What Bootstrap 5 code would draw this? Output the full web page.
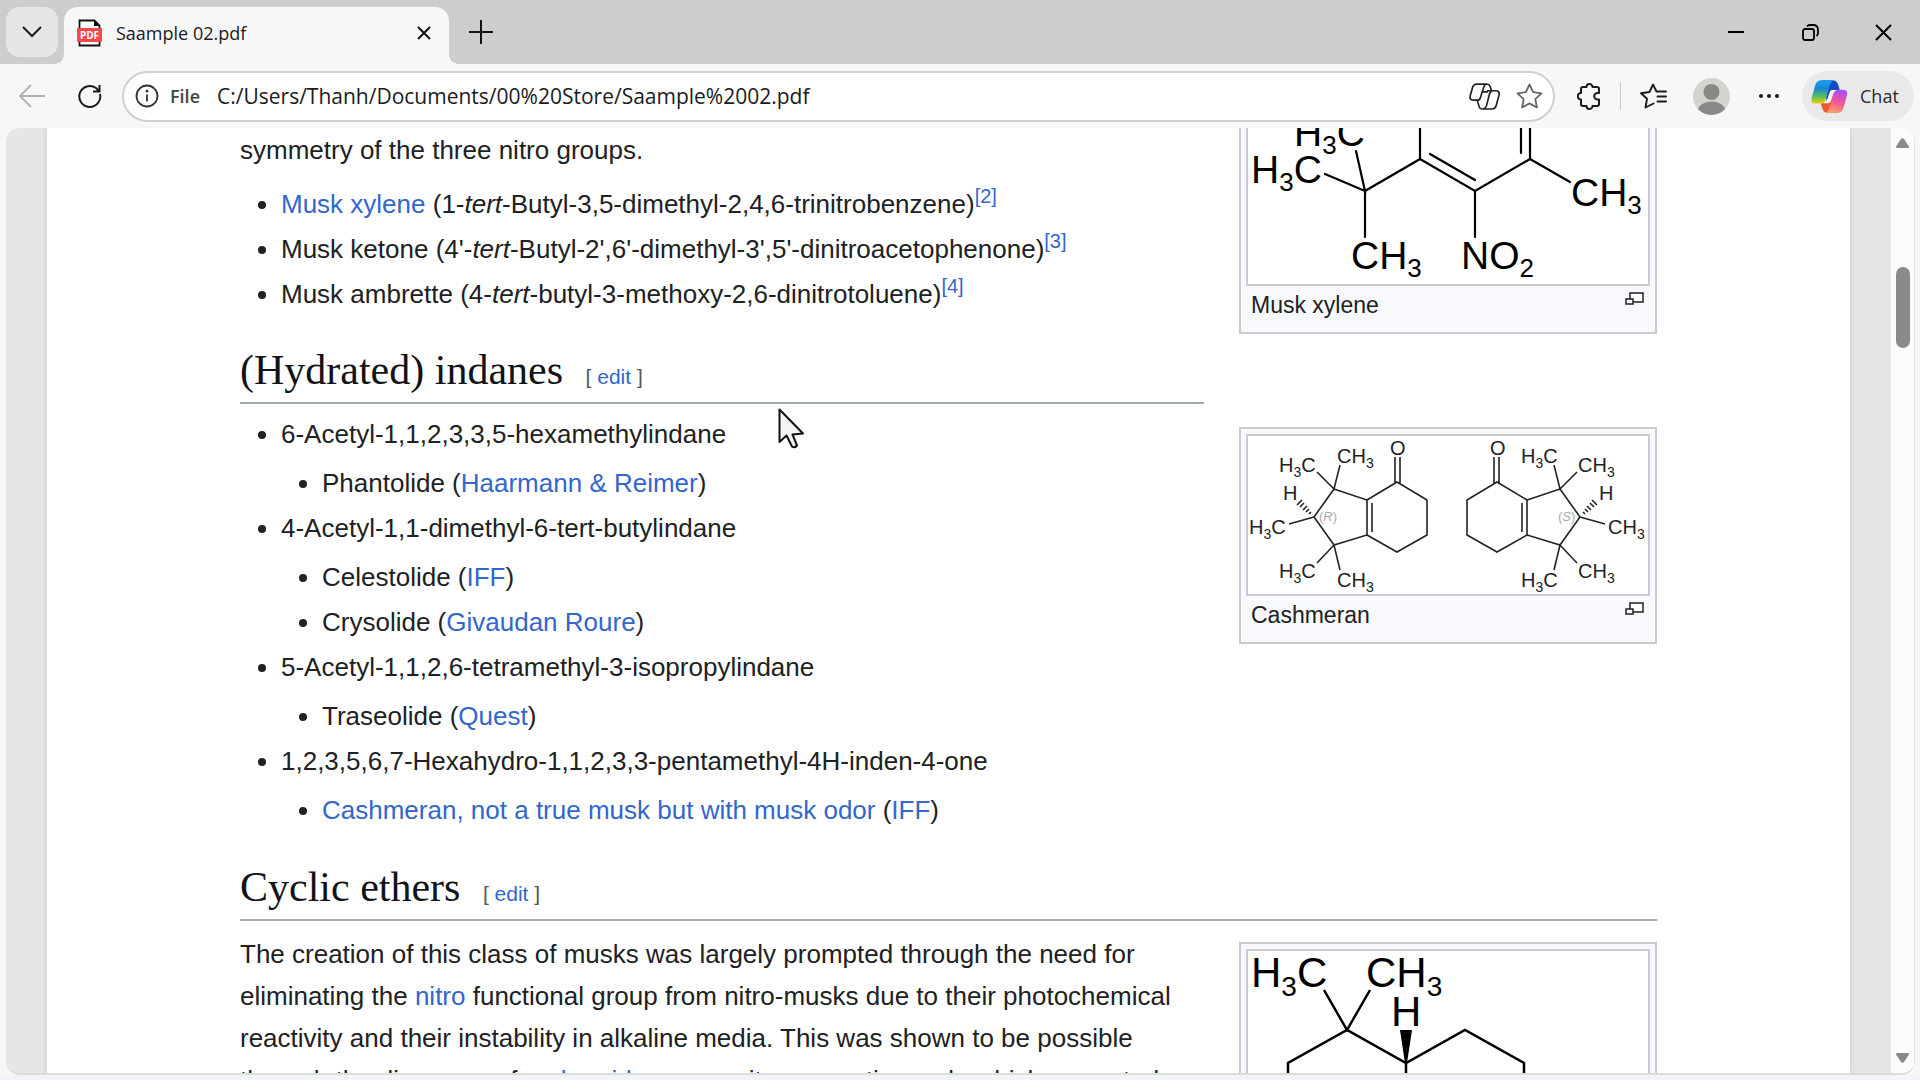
<!DOCTYPE html>
<html lang="en">
<head>
<meta charset="utf-8">
<meta name="viewport" content="width=device-width, initial-scale=1">
<title>Saample 02.pdf</title>
<link href="https://cdn.jsdelivr.net/npm/bootstrap@5.3.0/dist/css/bootstrap.min.css" rel="stylesheet">
<style>
  body { background: #f7f7f7; font-family: "Segoe UI", "Open Sans", "Noto Sans", sans-serif; color: #1b1b1b; }
  svg { display: block; flex: none; }
  .ico { background: none; border: 0; padding: 0; display: flex; align-items: center; justify-content: center; color: #1b1b1b; }

  /* tab strip */
  .tabstrip { flex: none; height: 64px; background: #cdcdcd; padding: 7px 14px 0 6px; }
  .tab-menu { width: 52px; height: 50px; border-radius: 14px; background: #e6e6e6; }
  .doc-tab { position: relative; width: 385px; height: 57px; margin-left: 6px; padding: 0 18px 6px 13px; background: #f7f7f7; border-radius: 14px 14px 0 0; }
  .doc-tab::before, .doc-tab::after { content: ""; position: absolute; bottom: 0; width: 10px; height: 10px; }
  .doc-tab::before { left: -10px; background: radial-gradient(circle at 0 0, transparent 10px, #f7f7f7 10px); }
  .doc-tab::after { right: -10px; background: radial-gradient(circle at 100% 0, transparent 10px, #f7f7f7 10px); }
  .doc-tab a { font-size: 18px; line-height: 24px; color: #1b1b1b; text-decoration: none; margin-left: 14px; }
  .new-tab { width: 24px; height: 50px; margin-left: 20px; }
  .win-btn { width: 74px; height: 50px; color: #000; }
  .win-btn:last-child { width: 46px; margin-left: 13px; }

  /* toolbar */
  .toolbar { flex: none; height: 64px; background: #f7f7f7; padding: 0 6px 0 18px; }
  .address { height: 51px; border: 2px solid #d0d0d0; border-radius: 26px; background: #fff; padding: 0 10px 0 11px; margin-left: 20px; }
  .address label { font-size: 18px; font-weight: 600; color: #444; margin: 0 17px 0 11px; }
  .address input { border: 0; outline: 0; background: transparent; font-size: 21px; color: #1b1b1b; padding: 2px 0 0; min-width: 0; }
  .tool-rule { width: 1px; height: 26px; background: #c9c9c9; margin: 0 19px; }
  .tool-gap { margin-left: 22px; }
  .avatar-gap { margin-left: 26px; }
  .chat-btn { width: 112px; height: 50px; border: 0; border-radius: 25px; background: #e9e9e9; font-size: 18px; padding: 0 0 0 9px; margin-left: 22px; color: #2a2a2a; }

  /* viewer */
  .viewer { margin: 0 5px 0 6px; border-radius: 14px; background: #e6e6e6; overflow: hidden; border-bottom: 2px solid #dcdcd9; min-height: 0; }
  .window-foot { flex: none; height: 5px; background: #f1f4f9; }
  .paper { flex: 1 1 0; margin: 0 41px; padding: 1px 193px 0; background: #fff; font-family: "Liberation Sans", Arial, sans-serif; font-size: 26px; line-height: 42px; color: #202122; box-shadow: 0 0 6px rgba(0,0,0,.12); min-width: 0; }
  .paper a { color: #36c; text-decoration: none; }
  .paper p { margin: 0; }
  .paper ul { margin: 12px 0 0; padding-left: 41px; list-style-type: disc; }
  .paper li { margin-bottom: 3px; }
  .paper ul ul { margin-top: 7px; }
  .paper h2 + ul { margin-top: 9px; }
  .paper sup { font-size: 20px; line-height: 0; }
  .paper h2 { margin: 27px 0 0; padding-bottom: 4px; border-bottom: 2px solid #a2a9b1; font-family: Georgia, "Liberation Serif", serif; font-size: 42px; font-weight: 400; line-height: 56px; color: #101418; }
  .paper .columns + h2 { margin-top: 25px; }
  .edit-link { font-family: "Liberation Sans", Arial, sans-serif; font-size: 21px; line-height: 21px; color: #54595d; margin-left: 12px; }
  .columns { gap: 35px; }
  .text-col { flex: 1 1 0; min-width: 0; }
  .side { flex: 0 0 418px; gap: 93px; margin-top: -1px; }
  .thumb { margin: 0; border: 2px solid #c8ccd1; background: #f8f9fc; padding: 5px 5px 0; }
  .thumb .plate { border: 2px solid #c8ccd1; background: #fff; }
  .thumb figcaption { height: 46px; padding: 1px 6px 0 5px; font-size: 23px; line-height: 36px; }
  .thumb.cut-top { border-top: 0; padding-top: 0; }
  .thumb.cut-top .plate { border-top: 0; }
  .thumb svg { width: 100%; height: auto; font-family: "Liberation Sans", Arial, sans-serif; }
  .last-thumb { margin-top: 22px; }
  .last-par { padding-top: 12px; }
  .enlarge { padding-top: 5px; }

  .scroller { flex: none; width: 24px; background: #fcfcfc; border-right: 1px solid #e2e2e2; padding: 10px 0; }
  .thumb-bar { width: 14px; height: 81px; border-radius: 7px; background: #8a8a8a; margin-top: 119px; }
  .pointer { position: absolute; left: 778px; top: 407px; }
</style>
<script src="https://cdn.jsdelivr.net/npm/bootstrap@5.3.0/dist/js/bootstrap.bundle.min.js"></script>
</head>
<body class="vh-100 d-flex flex-column overflow-hidden">

<header class="tabstrip d-flex align-items-start">
  <button class="ico tab-menu" aria-label="Tab actions">
    <svg width="22" height="14" viewBox="0 0 22 14" fill="none" stroke="#1b1b1b" stroke-width="2"><path d="M2 2l9 9 9-9"/></svg>
  </button>
  <div class="doc-tab d-flex align-items-center">
    <svg width="25" height="28" viewBox="0 0 25 28">
      <path d="M2.500 1.500h15l5 5v20h-20z" fill="#fff" stroke="#111" stroke-width="1.800"/>
      <path d="M17 1v6h6z" fill="#111"/>
      <rect x="0" y="9" width="25" height="14" rx="1" fill="#f8464b"/>
      <text x="12.500" y="20" text-anchor="middle" font-family="Open Sans, sans-serif" font-weight="700" font-size="10" fill="#fff">PDF</text>
    </svg>
    <a href="#" class="flex-grow-1">Saample 02.pdf</a>
    <button class="ico" aria-label="Close tab">
      <svg width="14" height="14" viewBox="0 0 14 14" stroke="#111" stroke-width="2"><path d="M1 1l12 12M13 1L1 13"/></svg>
    </button>
  </div>
  <button class="ico new-tab" aria-label="New tab">
    <svg width="24" height="24" viewBox="0 0 24 24" stroke="#111" stroke-width="2"><path d="M0 12h24M12 0v24"/></svg>
  </button>
  <div class="ms-auto d-flex">
    <button class="ico win-btn" aria-label="Minimize"><svg width="16" height="16" viewBox="0 0 16 16"><path d="M0 8h16" stroke="#000" stroke-width="2"/></svg></button>
    <button class="ico win-btn" aria-label="Restore"><svg width="17" height="17" viewBox="0 0 17 17" fill="none" stroke="#000" stroke-width="1.800"><rect x="1" y="5" width="11" height="11" rx="2"/><path d="M5 2.500q1-1.500 3-1.500h3q5 0 5 5v3q0 2-1.500 3"/></svg></button>
    <button class="ico win-btn" aria-label="Close"><svg width="17" height="17" viewBox="0 0 17 17" stroke="#000" stroke-width="2"><path d="M1 1l15 15M16 1L1 16"/></svg></button>
  </div>
</header>

<nav class="toolbar d-flex align-items-center" aria-label="Browser toolbar">
  <button class="ico" aria-label="Back"><svg width="27" height="24" viewBox="0 0 27 24" fill="none" stroke="#b0b0b0" stroke-width="1.800"><path d="M27 12H2M13 1L2 12l11 11"/></svg></button>
  <button class="ico ms-4 ps-2" aria-label="Reload"><svg width="25" height="24" viewBox="0 0 25 24" fill="none" stroke="#1b1b1b" stroke-width="2"><path d="M23 10A10.500 10.500 0 1 1 19 4L22 7M22.500 1v6.500h-6.500"/></svg></button>
  <div class="address d-flex align-items-center flex-grow-1">
    <svg width="24" height="24" viewBox="0 0 24 24" fill="none" stroke="#333" stroke-width="1.800"><circle cx="12" cy="12" r="10.500"/><path d="M12 10.500v7"/><circle cx="12" cy="7" r=".6"/></svg>
    <label for="url">File</label>
    <input id="url" type="text" class="flex-grow-1" value="C:/Users/Thanh/Documents/00%20Store/Saample%2002.pdf">
    <button class="ico" aria-label="Copilot"><svg width="31" height="27" viewBox="29 58 92 80" fill="none" stroke="#222" stroke-width="5" stroke-linejoin="round"><path d="M52 61h30q7 0 9 6l5 14M52 61q-9 0-12 9l-7 24q-4 15 8 15h19M80 61q-5 2-7 9l-10 31q-2 8-9 8M82 81h26q13 0 10 13l-8 30q-3 11-13 11H68q-7 0-9-7l-5-17M98 81q-6 2-8 9l-9 35q-2 8-10 10M69 84h16"/></svg></button>
    <button class="ico ms-3" aria-label="Add to favorites"><svg width="27" height="26" viewBox="0 0 27 26" fill="none" stroke="#666" stroke-width="1.800" stroke-linejoin="round"><path d="M13.500 1.500l3.600 7.700 8.400 1.100-6.200 5.800 1.600 8.400-7.400-4.100-7.400 4.100 1.600-8.400-6.200-5.800 8.400-1.100z"/></svg></button>
  </div>
  <button class="ico tool-gap" aria-label="Extensions"><svg width="24" height="27" viewBox="0 0 24 27" fill="none" stroke="#1b1b1b" stroke-width="2" stroke-linejoin="round"><path d="M6 4h3.500a3 3 0 0 1 6 0H20q2 0 2 2v4h-1.500a3.300 3.300 0 0 0 0 6.600H22V21q0 2-2 2h-4.500a3 3 0 0 1-6 0H6q-2 0-2-2v-4.500a3 3 0 0 1 0-6.500V6q0-2 2-2z"/></svg></button>
  <div class="tool-rule"></div>
  <button class="ico" aria-label="Favorites"><svg width="27" height="26" viewBox="0 0 27 26" fill="none" stroke="#1b1b1b" stroke-width="1.900" stroke-linejoin="round" stroke-linecap="round"><path d="M16.500 8.500L13 1.500 9.500 9 1 10.300l6 5.500L5.500 24.500l8-4M16.500 8.500H26M17.500 13.500H26M17.500 18.500H26"/></svg></button>
  <button class="ico avatar-gap" aria-label="Profile"><svg width="37" height="37" viewBox="0 0 37 37"><defs><clipPath id="face"><circle cx="18.500" cy="18.500" r="18.500"/></clipPath></defs><g clip-path="url(#face)"><rect width="37" height="37" fill="#d5d3d0"/><circle cx="18.500" cy="14" r="8" fill="#8a8886"/><ellipse cx="18.500" cy="34" rx="14" ry="10.500" fill="#8a8886"/></g></svg></button>
  <button class="ico ms-4 ps-1" aria-label="Settings and more"><svg width="22" height="6" viewBox="0 0 22 6" fill="#1b1b1b"><circle cx="3" cy="3" r="2"/><circle cx="11" cy="3" r="2"/><circle cx="19" cy="3" r="2"/></svg></button>
  <button class="chat-btn d-flex align-items-center gap-2">
    <svg width="37" height="35" viewBox="1053 45 112 105">
      <defs>
        <linearGradient id="cool" x1="0" y1="0" x2="0" y2="1"><stop offset="0" stop-color="#1aa0f2"/><stop offset=".35" stop-color="#1787d6"/><stop offset=".7" stop-color="#5cc05a"/><stop offset="1" stop-color="#f3d000"/></linearGradient>
        <linearGradient id="warm" x1=".6" y1="0" x2=".3" y2="1"><stop offset="0" stop-color="#a84df0"/><stop offset=".5" stop-color="#f0569a"/><stop offset="1" stop-color="#ffa36a"/></linearGradient>
      </defs>
      <path d="M1085 48h32q14 0 18 13l5 17h-18q-9 0-12 9l-9 24z" fill="#1a49c8"/>
      <path d="M1135 147h-30q-14 0-17-12l-6-17h19q9 0 12-9l9-24z" fill="#f2562f"/>
      <path d="M1084 48h40q-10 1-14 15l-12 42q-4 14-17 14h-13q-18 0-13-18l11-38q4-15 18-15z" fill="url(#cool)"/>
      <path d="M1134 147h-38q8-2 12-14l12-42q4-14 17-14h12q17 0 13 17l-11 38q-4 15-17 15z" fill="url(#warm)"/>
      <path d="M1117 78h13q-7 3-10 12l-6 19q-3 9-11 9h-4l10-32q2-7 8-8z" fill="#f4f2f8"/>
    </svg>
    <span class="ps-1">Chat</span>
  </button>
</nav>

<main class="viewer d-flex flex-grow-1">
  <article class="paper">
    <div class="columns d-flex">
      <div class="text-col">
        <p>symmetry of the three nitro groups.</p>
        <ul>
          <li><a href="#">Musk xylene</a> (1-<i>tert</i>-Butyl-3,5-dimethyl-2,4,6-trinitrobenzene)<sup><a href="#">[2]</a></sup></li>
          <li>Musk ketone (4'-<i>tert</i>-Butyl-2',6'-dimethyl-3',5'-dinitroacetophenone)<sup><a href="#">[3]</a></sup></li>
          <li>Musk ambrette (4-<i>tert</i>-butyl-3-methoxy-2,6-dinitrotoluene)<sup><a href="#">[4]</a></sup></li>
        </ul>
        <h2>(Hydrated) indanes <span class="edit-link">[ <a href="#">edit</a> ]</span></h2>
        <ul>
          <li>6-Acetyl-1,1,2,3,3,5-hexamethylindane
            <ul><li>Phantolide (<a href="#">Haarmann &amp; Reimer</a>)</li></ul>
          </li>
          <li>4-Acetyl-1,1-dimethyl-6-tert-butylindane
            <ul><li>Celestolide (<a href="#">IFF</a>)</li><li>Crysolide (<a href="#">Givaudan Roure</a>)</li></ul>
          </li>
          <li>5-Acetyl-1,1,2,6-tetramethyl-3-isopropylindane
            <ul><li>Traseolide (<a href="#">Quest</a>)</li></ul>
          </li>
          <li>1,2,3,5,6,7-Hexahydro-1,1,2,3,3-pentamethyl-4H-inden-4-one
            <ul><li><a href="#">Cashmeran, not a true musk but with musk odor</a> (<a href="#">IFF</a>)</li></ul>
          </li>
        </ul>
      </div>
      <div class="side d-flex flex-column">
        <figure class="thumb cut-top">
          <div class="plate">
            <svg viewBox="28 8 400 156" role="img" aria-label="Musk xylene structure">
              <g stroke="#000" stroke-width="2.200" fill="none" stroke-linecap="round">
                <path d="M136 31L145 71L105 54M145 117V71L200 39V0M200 39L255 71L310 39V0M210 34L255 60M301 0V33M310 39L350 62M255 71V117"/>
              </g>
              <g font-size="39" fill="#000">
                <text x="74" y="26">H<tspan font-size="26" dy="8">3</tspan><tspan dy="-8">C</tspan></text>
                <text x="31" y="63">H<tspan font-size="26" dy="8">3</tspan><tspan dy="-8">C</tspan></text>
                <text x="351" y="86">CH<tspan font-size="26" dy="8">3</tspan></text>
                <text x="131" y="149">CH<tspan font-size="26" dy="8">3</tspan></text>
                <text x="241" y="149">NO<tspan font-size="26" dy="8">2</tspan></text>
              </g>
            </svg>
          </div>
          <figcaption class="d-flex justify-content-between"><span>Musk xylene</span>
            <a href="#" class="enlarge" aria-label="Enlarge"><svg viewBox="0 0 19 13" style="width:19px" fill="#fff" stroke="#202122" stroke-width="1.500"><rect x="5" y="1" width="13" height="9"/><rect x="1" y="7" width="7" height="5"/></svg></a>
          </figcaption>
        </figure>
        <figure class="thumb">
          <div class="plate">
            <svg viewBox="28 26 400 158" role="img" aria-label="Cashmeran structure">
              <defs>
                <g id="indane" stroke="#222" stroke-width="1.600" fill="none">
                  <path d="M97 62L114 79L120 55M114 79L147 90V125L114 135L94 107ZM152 93V122M147 90L177 72L207 90V125L177 142L147 125M175 47V73M180 47V73M94 107L69 114M97 153L114 135L120 160"/>
                  <path d="M82 90l-5 5M84 93l-4 4M87 96l-4 4M89 99l-3 3M91 102l-2 2"/>
                </g>
              </defs>
              <g font-size="13" fill="#aaa"><text x="99" y="111">(<tspan font-style="italic">R</tspan>)</text><text x="338" y="111">(<tspan font-style="italic">S</tspan>)</text></g>
              <use href="#indane"/>
              <use href="#indane" transform="translate(454 0) scale(-1 1)"/>
              <g font-size="20" fill="#222">
                <text x="59" y="62">H<tspan font-size="14" dy="5">3</tspan><tspan dy="-5">C</tspan></text>
                <text x="117" y="53">CH<tspan font-size="14" dy="5">3</tspan></text>
                <text x="170" y="45">O</text>
                <text x="63" y="90">H</text>
                <text x="29" y="124">H<tspan font-size="14" dy="5">3</tspan><tspan dy="-5">C</tspan></text>
                <text x="59" y="168">H<tspan font-size="14" dy="5">3</tspan><tspan dy="-5">C</tspan></text>
                <text x="117" y="177">CH<tspan font-size="14" dy="5">3</tspan></text>
                <text x="270" y="45">O</text>
                <text x="301" y="53">H<tspan font-size="14" dy="5">3</tspan><tspan dy="-5">C</tspan></text>
                <text x="358" y="62">CH<tspan font-size="14" dy="5">3</tspan></text>
                <text x="379" y="90">H</text>
                <text x="388" y="124">CH<tspan font-size="14" dy="5">3</tspan></text>
                <text x="358" y="168">CH<tspan font-size="14" dy="5">3</tspan></text>
                <text x="301" y="177">H<tspan font-size="14" dy="5">3</tspan><tspan dy="-5">C</tspan></text>
              </g>
            </svg>
          </div>
          <figcaption class="d-flex justify-content-between"><span>Cashmeran</span>
            <a href="#" class="enlarge" aria-label="Enlarge"><svg viewBox="0 0 19 13" style="width:19px" fill="#fff" stroke="#202122" stroke-width="1.500"><rect x="5" y="1" width="13" height="9"/><rect x="1" y="7" width="7" height="5"/></svg></a>
          </figcaption>
        </figure>
      </div>
    </div>
    <h2>Cyclic ethers <span class="edit-link">[ <a href="#">edit</a> ]</span></h2>
    <div class="columns d-flex">
      <p class="last-par text-col">The creation of this class of musks was largely prompted through the need for eliminating the <a href="#">nitro</a> functional group from nitro-musks due to their photochemical reactivity and their instability in alkaline media. This was shown to be possible through the discovery of <a href="#">ambroxide</a>, a non-nitro aromatic musk, which promoted</p>
      <div class="side">
        <figure class="thumb last-thumb">
          <div class="plate">
            <svg viewBox="1248 952 400 160" role="img" aria-label="Cyclic ether structure">
              <path d="M1324 991L1347 1031L1370 991M1288 1120V1064L1347 1031L1406 1064L1465 1031L1524 1064V1120M1406 1064V1120" stroke="#000" stroke-width="2.500" fill="none"/>
              <path d="M1400 1031h12l-5 33h-2z"/>
              <g font-size="42" fill="#000">
                <text x="1251" y="988">H<tspan font-size="28" dy="9">3</tspan><tspan dy="-9">C</tspan></text>
                <text x="1366" y="988">CH<tspan font-size="28" dy="9">3</tspan></text>
                <text x="1391" y="1027">H</text>
              </g>
            </svg>
          </div>
        </figure>
      </div>
    </div>
  </article>
  <div class="scroller d-flex flex-column align-items-center" aria-hidden="true">
    <svg width="13" height="10" viewBox="0 0 13 10" fill="#8a8a8a"><path d="M5 1q1.500-1.500 3 0l5 7.500q0 1.500-1 1.500H1Q0 10 0 8.500z"/></svg>
    <div class="thumb-bar"></div>
    <svg class="mt-auto" width="13" height="10" viewBox="0 0 13 10" fill="#8a8a8a"><path d="M5 9q1.500 1.500 3 0l5-7.500Q13 0 12 0H1Q0 0 0 1.500z"/></svg>
  </div>
</main>
<div class="window-foot"></div>

<svg class="pointer" width="28" height="42" viewBox="0 0 28 42" fill="#f4f4f4" stroke="#111" stroke-width="2" stroke-linejoin="round"><path d="M1.500 2.500V35l7-6.500 5.500 11q2.500 2 5-1L14.500 27.500 25 26.500z"/></svg>
</body>
</html>
